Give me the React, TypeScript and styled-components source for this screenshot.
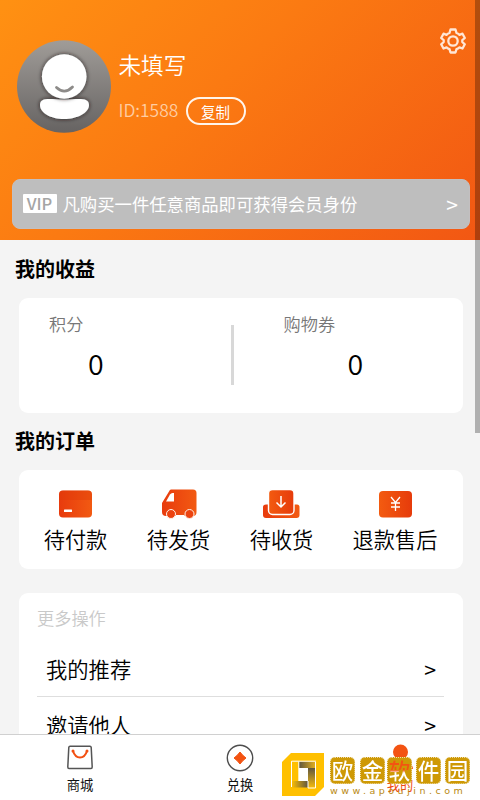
import React from "react";
import styled, { createGlobalStyle } from "styled-components";

const Global = createGlobalStyle`
  * { box-sizing: border-box; }
  body { margin: 0; background: #f4f4f4; overflow: hidden; font-family: "Noto Sans CJK SC", sans-serif; font-weight: 350; color: #000; }
`;

const Screen = styled.div`
  position: relative;
  width: 480px;
  height: 800px;
  display: flex;
  flex-direction: column;
  overflow: hidden;
`;
const Content = styled.main`
  flex: 1;
  min-height: 0;
  overflow: hidden;
`;
const Header = styled.header`
  height: 240px;
  padding: 40px 10px 0 11.5px;
  background: linear-gradient(137deg, #ff9112 0%, #fb7a12 42%, #f25713 100%);
  color: #fff;
`;
const Profile = styled.div`
  display: flex;
  height: 139px;
  padding-left: 5px;
`;
const Identity = styled.div`
  margin-left: 8px;
  padding-top: 9px;
  flex: 1;
`;
const Name = styled.div`
  font-size: 22.6px;
  line-height: 32px;
`;
const IdRow = styled.div`
  display: flex;
  align-items: center;
  margin-top: 16px;
  height: 28px;
  gap: 7px;
`;
const UserId = styled.span`
  width: 60px;
  margin-top: -2px;
  font-size: 17.4px;
  line-height: 26px;
  white-space: nowrap;
  color: #ffcda2;
`;
const Copy = styled.button`
  width: 60px;
  height: 28px;
  padding: 0;
  border: 2px solid #fff5ec;
  border-radius: 14px;
  background: none;
  color: #fff;
  font: 400 14.5px/23px "Noto Sans CJK SC", sans-serif;
`;
const SettingsSlot = styled.div`
  width: 30px;
  margin: -13px 0 0 0;
`;
const VipBar = styled.div`
  display: flex;
  align-items: center;
  height: 50px;
  padding: 0 12px 0 10px;
  border-radius: 8px;
  background: #bebebe;
  border: 1px solid #c3bfc0;
  font-size: 17.35px;
  font-weight: 400;
`;
const VipText = styled.span`
  margin-top: -2px;
`;
const VipTag = styled.span`
  width: 34px;
  height: 19px;
  margin: -1px 6px 0 0;
  border-radius: 1px;
  background: #fff;
  color: #a5a5a5;
  font: 500 16.5px/18px "Noto Sans CJK SC", sans-serif;
  text-align: center;
`;
const VipArrow = styled.span`
  margin: -1px -1px 0 auto;
  font-size: 21px;
  line-height: 24px;
`;
const Title = styled.h2<{ $top: number }>`
  margin: 0;
  padding: ${(p) => p.$top}px 0 0 15px;
  font-size: 20px;
  line-height: 28px;
  font-weight: 600;
`;
const Card = styled.section<{ $height: number; $top: number }>`
  width: 444px;
  height: ${(p) => p.$height}px;
  margin: ${(p) => p.$top}px 0 0 19px;
  border-radius: 9px;
  background: #fff;
`;
const Earnings = styled(Card)`
  display: grid;
  grid-template-columns: 211.5px 3px 1fr;
`;
const Metric = styled.div<{ $left: number; $valueLeft: number }>`
  padding: 13px 0 0 ${(p) => p.$left}px;
  font-size: 17.2px;
  line-height: 26px;
  color: #777;
  strong {
    display: block;
    margin-top: 6px;
    padding-left: ${(p) => p.$valueLeft}px;
    font-size: 28.5px;
    line-height: 40px;
    font-weight: 350;
    color: #000;
  }
`;
const Separator = styled.i`
  height: 60px;
  margin-top: 27px;
  background: #d8d8d8;
`;
const Orders = styled(Card)`
  display: grid;
  grid-template-columns: 103px 103px 103px 1fr;
  padding: 17px 6px 0 5px;
`;
const Order = styled.div`
  display: flex;
  flex-direction: column;
  align-items: center;
  font-size: 21.2px;
  line-height: 30px;
  white-space: nowrap;
  svg { display: block; margin-bottom: 3px; }
`;
const OrderLabel = styled.span``;
const More = styled(Card)`
  padding: 12px 19px 0 18px;
`;
const MoreTitle = styled.div`
  height: 36px;
  font-size: 17.2px;
  line-height: 26px;
  color: #c9c9c9;
`;
const MoreRow = styled.div`
  display: flex;
  justify-content: space-between;
  height: 56px;
  padding: 11px 8px 0 9px;
  font-size: 21.3px;
  line-height: 34px;
  border-bottom: 1.5px solid #dedede;
`;
const RowArrow = styled.span`
  font-weight: 400;
`;
const TabBar = styled.nav`
  display: grid;
  grid-template-columns: repeat(3, 1fr);
  height: 66px;
  border-top: 1.5px solid #d0d0d0;
  background: #fff;
`;
const Tab = styled.div<{ $active?: boolean }>`
  display: flex;
  flex-direction: column;
  align-items: center;
  padding-top: 9px;
  font-size: 13.3px;
  font-weight: 400;
  line-height: 20px;
  color: ${(p) => (p.$active ? "#f04c13" : "#111")};
  svg { display: block; margin-bottom: 3px; }
`;
const Scrollbar = styled.div`
  position: absolute;
  top: 0;
  right: 0;
  width: 5px;
  height: 433px;
  background: rgba(0, 0, 0, 0.28);
`;
const Watermark = styled.div`
  position: absolute;
  left: 282px;
  top: 753px;
  display: flex;
  gap: 6px;
  width: 192px;
  height: 44px;
  svg { flex: none; }
`;
const Brand = styled.div`
  padding-top: 4px;
`;
const Tiles = styled.div`
  display: grid;
  grid-template-columns: 30px 27px 29px 29px 26px;
  height: 27px;
`;
const Tile = styled.span`
  width: 25px;
  height: 27px;
  border: 1px dotted #f0dca6;
  border-radius: 5px;
  background: #ce9905;
  font-size: 21.5px;
  font-weight: 500;
  line-height: 24px;
  text-align: center;
`;
const Glyph = styled.span<{ $tinted: boolean }>`
  display: block;
  margin: 0 -1px;
  color: transparent;
  background: ${(p) => (p.$tinted ? "linear-gradient(#f35312 50%, #fff 62%)" : "#fff")};
  background-clip: text;
  -webkit-background-clip: text;
`;
const Url = styled.div`
  padding-top: 1px;
  font: 9.5px/12px "DejaVu Sans", sans-serif;
  letter-spacing: 3.5px;
  white-space: nowrap;
  color: #b98a14;
`;

function Avatar() {
  return (
    <svg width="94" height="93" viewBox="0 0 94 93">
      <defs>
        <linearGradient id="avatar" x1="0" y1="0" x2="0" y2="1">
          <stop stopColor="#a09c98" /><stop offset="1" stopColor="#666362" />
        </linearGradient>
        <filter id="shade" x="-30%" y="-30%" width="160%" height="160%">
          <feDropShadow dx="0" dy="0" stdDeviation="2" floodColor="#1b1713" floodOpacity=".9" />
        </filter>
      </defs>
      <ellipse cx="47" cy="46.5" rx="47" ry="46.3" fill="url(#avatar)" />
      <g fill="#fff">
        <path filter="url(#shade)" d="M47 59.500C32 59 23 57 23 65C23 73 34 79 47 79S72 73 72 65C72 57 62 59 47 59.500Z" />
        <circle filter="url(#shade)" cx="47.200" cy="36.500" r="22.300" />
      </g>
      <path d="M39.500 47.500Q47.500 55 55.500 47" fill="none" stroke="#8d8b89" strokeWidth="2.800" strokeLinecap="round" />
    </svg>
  );
}

function Gear() {
  return (
    <svg width="26" height="28" viewBox="0 0 26 28" fill="none" stroke="#ffe6d6" strokeWidth="2.300" strokeLinejoin="round">
      <path d="M10.500 2.500H15.500L16.500 6Q18 6.500 19.500 7.800L22.500 6.700L24.800 11L22.300 13.200V15L24.800 17.300L22.500 21.500L19.500 20.400Q18 21.700 16.500 22.200L15.500 25.500H10.500L9.500 22.200Q8 21.700 6.500 20.400L3.500 21.500L1.200 17.300L3.700 15V13.200L1.200 11L3.500 6.700L6.500 7.800Q8 6.500 9.500 6Z" />
      <circle cx="13" cy="14" r="4.700" />
    </svg>
  );
}

const OrangeFill = ({ id }: { id: string }) => (
  <linearGradient id={id}><stop stopColor="#e83b0d" /><stop offset="1" stopColor="#f25a12" /></linearGradient>
);

function CardIcon() {
  return (
    <svg width="36" height="34" viewBox="0 0 36 34">
      <defs><OrangeFill id="card" /></defs>
      <rect x="1" y="3.500" width="33" height="27" rx="4" fill="url(#card)" />
      <path d="M1 13V7.500Q1 3.500 5 3.500H30Q34 3.500 34 7.500V13Z" fill="#dd3609" opacity=".35" />
      <rect x="6" y="22.500" width="8" height="2.500" rx=".5" fill="#fff" />
    </svg>
  );
}
function TruckIcon() {
  return (
    <svg width="36" height="34" viewBox="0 0 36 34">
      <defs><OrangeFill id="truck" /></defs>
      <path d="M10 2.500H32Q35.500 2.500 35.500 6V25Q35.500 29 32 29H5Q1 29 1 25V16L8 4.500Q8.800 2.500 10 2.500Z" fill="url(#truck)" />
      <path d="M5 14.500L9 7.500Q10 6 11.500 6H13V14.500Z" fill="#fff" />
      <g fill="#ec4310" stroke="#fff1e8"><circle cx="10" cy="27" r="4.500" /><circle cx="28.500" cy="27" r="4.500" /></g>
      <path d="M15 28.500H23.500" stroke="#fff" />
    </svg>
  );
}
function ReceiveIcon() {
  return (
    <svg width="38" height="34" viewBox="0 0 38 34">
      <defs><OrangeFill id="receive" /><linearGradient id="parcel"><stop stopColor="#f35b10" /><stop offset="1" stopColor="#e63b0b" /></linearGradient></defs>
      <path d="M3 17.500H34Q36.500 17.500 36.500 20V28Q36.500 31 33.500 31H3Q0 31 0 28V20Q0 17.500 3 17.500Z" fill="url(#receive)" />
      <rect x="5.500" y="2.500" width="25.500" height="25" rx="4" fill="url(#parcel)" stroke="#fff" strokeWidth="1.400" />
      <path d="M18 9V20M13.500 15.500L18 20L22.500 15.500" fill="none" stroke="#fff" strokeWidth="1.500" />
    </svg>
  );
}
function RefundIcon() {
  return (
    <svg width="36" height="34" viewBox="0 0 36 34">
      <defs><linearGradient id="refund"><stop stopColor="#f35b10" /><stop offset="1" stopColor="#e63b0b" /></linearGradient></defs>
      <rect x="2" y="4" width="33" height="26.500" rx="4" fill="url(#refund)" />
      <path d="M14 10L18.500 15.500L23 10M14 16H23M14 20H23M18.500 15.500V24" fill="none" stroke="#fff" strokeWidth="1.300" />
    </svg>
  );
}
function BagIcon() {
  return (
    <svg width="28" height="28" viewBox="0 0 28 28" fill="none">
      <path d="M4 2.200H24Q25 2.200 25.200 3.400L26.200 23Q26.200 24.500 25 24.500H3Q1.800 24.500 1.800 23L2.800 3.400Q3 2.200 4 2.200Z" stroke="#555" strokeWidth="1.500" />
      <path d="M7 7Q9 13.500 14 13.500T21 7" stroke="#f25012" strokeWidth="2" />
      <circle cx="7" cy="7" r="1.500" fill="#f25012" /><circle cx="21" cy="7" r="1.500" fill="#f25012" />
    </svg>
  );
}
function ExchangeIcon() {
  return (
    <svg width="28" height="28" viewBox="0 0 28 28">
      <circle cx="14" cy="14" r="12.700" fill="none" stroke="#4d4d4d" strokeWidth="1.400" />
      <path d="M14 8Q16.500 11.500 20 14Q16.500 16.500 14 20Q11.500 16.500 8 14Q11.500 11.500 14 8Z" fill="#f35312" stroke="#f35312" />
    </svg>
  );
}
function PersonIcon() {
  return (
    <svg width="28" height="28" viewBox="0 0 28 28" fill="#f35312">
      <circle cx="14.500" cy="8" r="7.500" /><path d="M2 25Q3 16 14.500 16T27 25Z" />
    </svg>
  );
}
function RingLogo() {
  return (
    <svg width="42" height="43" viewBox="0 0 42 43">
      <defs>
        <linearGradient id="foldTop"><stop stopColor="#5f5640" /><stop offset="1" stopColor="#e8b21a" /></linearGradient>
        <linearGradient id="foldSide" x1="0" y1="0" x2="0" y2="1"><stop stopColor="#5f5640" /><stop offset="1" stopColor="#f0b810" /></linearGradient>
        <linearGradient id="foldBottom"><stop stopColor="#ffc000" /><stop offset="1" stopColor="#5f5640" /></linearGradient>
      </defs>
      <path d="M9 0H42V34L33 43H0V9Z" fill="#ffc000" />
      <path d="M17 8.500H34V15H17Z" fill="url(#foldTop)" />
      <path d="M17 15H26V28H17Z" fill="#fff" />
      <path d="M26 15H33V34H26Z" fill="url(#foldSide)" />
      <path d="M9.500 28H26V34.500H9.500Z" fill="url(#foldBottom)" />
      <path d="M9.500 34V8.200H34M16.800 8.500V28M26 28V35H33.500V9" fill="none" stroke="#fff" strokeWidth="1" />
    </svg>
  );
}

const orders = [
  { label: "待付款", Icon: CardIcon },
  { label: "待发货", Icon: TruckIcon },
  { label: "待收货", Icon: ReceiveIcon },
  { label: "退款售后", Icon: RefundIcon },
];
const tabs = [
  { label: "商城", Icon: BagIcon },
  { label: "兑换", Icon: ExchangeIcon },
  { label: "我的", Icon: PersonIcon, active: true },
];

export default function App() {
  return (
    <Screen>
      <Global />
      <Content>
        <Header>
          <Profile>
            <Avatar />
            <Identity>
              <Name>未填写</Name>
              <IdRow><UserId>ID:1588</UserId><Copy>复制</Copy></IdRow>
            </Identity>
            <SettingsSlot><Gear /></SettingsSlot>
          </Profile>
          <VipBar>
            <VipTag>VIP</VipTag>
            <VipText>凡购买一件任意商品即可获得会员身份</VipText>
            <VipArrow>&gt;</VipArrow>
          </VipBar>
        </Header>
        <Title $top={15}>我的收益</Title>
        <Earnings $height={115} $top={15}>
          <Metric $left={30} $valueLeft={39}>积分<strong>0</strong></Metric>
          <Separator />
          <Metric $left={50} $valueLeft={64}>购物券<strong>0</strong></Metric>
        </Earnings>
        <Title $top={14}>我的订单</Title>
        <Orders $height={99} $top={15}>
          {orders.map(({ label, Icon }) => (
            <Order key={label}><Icon /><OrderLabel>{label}</OrderLabel></Order>
          ))}
        </Orders>
        <More $height={250} $top={24}>
          <MoreTitle>更多操作</MoreTitle>
          <MoreRow><span>我的推荐</span><RowArrow>&gt;</RowArrow></MoreRow>
          <MoreRow><span>邀请他人</span><RowArrow>&gt;</RowArrow></MoreRow>
        </More>
      </Content>
      <TabBar>
        {tabs.map(({ label, Icon, active }) => (
          <Tab key={label} $active={active}><Icon />{label}</Tab>
        ))}
      </TabBar>
      <Scrollbar />
      <Watermark>
        <RingLogo />
        <Brand>
          <Tiles>
            {[..."欧金软件园"].map((char) => (
              <Tile key={char}><Glyph $tinted={char === "软"}>{char}</Glyph></Tile>
            ))}
          </Tiles>
          <Url>www.apoujin.com</Url>
        </Brand>
      </Watermark>
    </Screen>
  );
}
